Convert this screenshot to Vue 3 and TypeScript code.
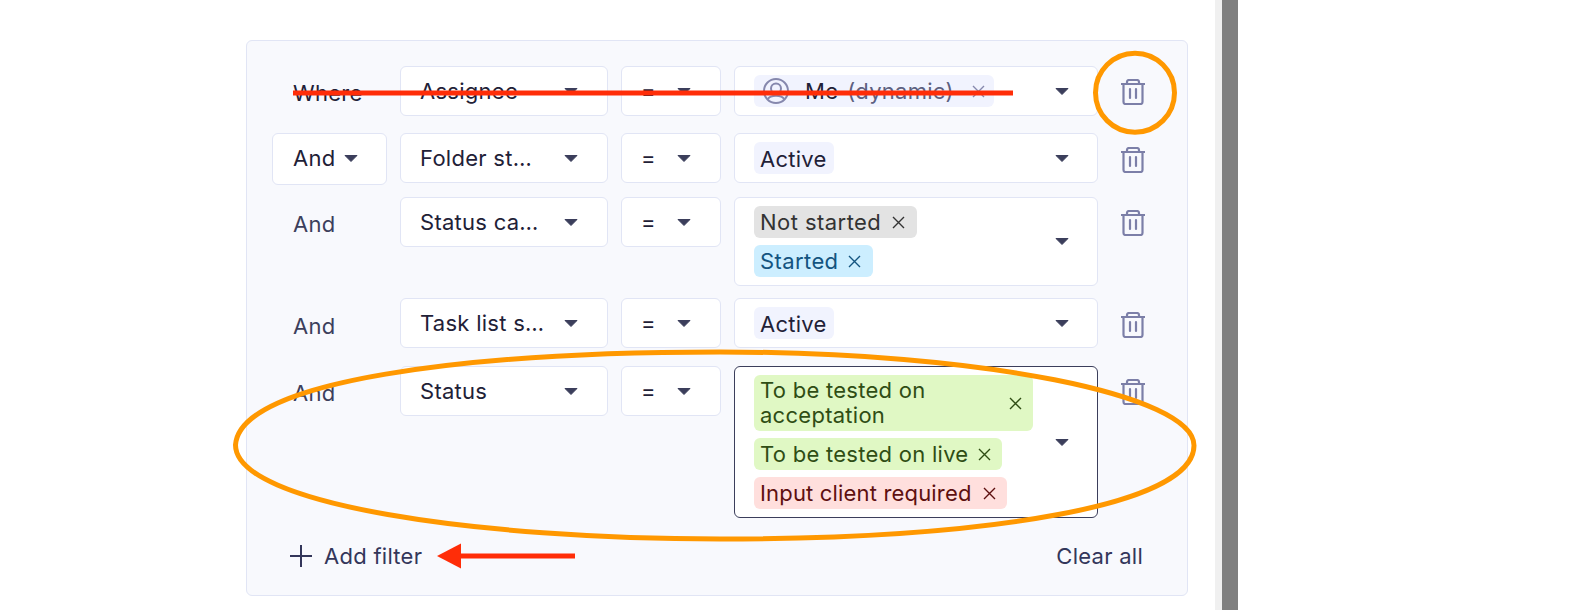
<script setup lang="ts">
interface Chip {
  text: string
  tone: string
  removable: boolean
  hint?: string
  avatar?: boolean
}
interface FilterRow {
  label: string
  labelSelect: boolean
  field: string
  chips: Chip[]
  focused: boolean
  tall: boolean
}

const rows: FilterRow[] = [
  {
    label: 'Where',
    labelSelect: false,
    field: 'Assignee',
    focused: false,
    tall: false,
    chips: [{ text: 'Me', hint: '(dynamic)', tone: 'me', removable: true, avatar: true }],
  },
  {
    label: 'And',
    labelSelect: true,
    field: 'Folder st…',
    focused: false,
    tall: true,
    chips: [{ text: 'Active', tone: 'plain', removable: false }],
  },
  {
    label: 'And',
    labelSelect: false,
    field: 'Status ca…',
    focused: false,
    tall: false,
    chips: [
      { text: 'Not started', tone: 'grey', removable: true },
      { text: 'Started', tone: 'blue', removable: true },
    ],
  },
  {
    label: 'And',
    labelSelect: false,
    field: 'Task list s…',
    focused: false,
    tall: true,
    chips: [{ text: 'Active', tone: 'plain', removable: false }],
  },
  {
    label: 'And',
    labelSelect: false,
    field: 'Status',
    focused: true,
    tall: false,
    chips: [
      { text: 'To be tested on acceptation', tone: 'green', removable: true },
      { text: 'To be tested on live', tone: 'green', removable: true },
      { text: 'Input client required', tone: 'red', removable: true },
    ],
  },
]
</script>

<template>
  <div class="page">
    <section class="panel">
      <div v-for="(row, i) in rows" :key="i" class="row" :class="{ tall: row.tall }">
        <div v-if="row.labelSelect" class="select conj">
          <span>{{ row.label }}</span>
          <svg class="caret" viewBox="0 0 14 7"><path d="M1 0.5H13L7 6.5Z" /></svg>
        </div>
        <div v-else class="label" :class="{ strong: row.label === 'Where' }">{{ row.label }}</div>

        <div class="select field">
          <span>{{ row.field }}</span>
          <svg class="caret" viewBox="0 0 14 7"><path d="M1 0.5H13L7 6.5Z" /></svg>
        </div>

        <div class="select op">
          <span>=</span>
          <svg class="caret" viewBox="0 0 14 7"><path d="M1 0.5H13L7 6.5Z" /></svg>
        </div>

        <div class="value" :class="{ focused: row.focused }">
          <div class="chips">
            <div v-for="chip in row.chips" :key="chip.text" class="chip" :class="chip.tone">
              <svg v-if="chip.avatar" class="avatar" viewBox="0 0 26 26">
                <circle cx="13" cy="13" r="12" />
                <circle cx="13" cy="10.5" r="5" />
                <path d="M5 21C7 16.5 19 16.5 21 21" />
              </svg>
              <span class="chip-text">{{ chip.text }}</span>
              <span v-if="chip.hint" class="hint">{{ chip.hint }}</span>
              <svg v-if="chip.removable" class="remove" viewBox="0 0 13 13">
                <path d="M1 1L12 12M12 1L1 12" />
              </svg>
            </div>
          </div>
          <svg class="caret" viewBox="0 0 14 7"><path d="M1 0.5H13L7 6.5Z" /></svg>
        </div>

        <svg class="trash" viewBox="0 0 24 26">
          <path d="M0.5 5H23.5" />
          <path d="M6 5V3A2 2 0 0 1 8 1H16A2 2 0 0 1 18 3V5" />
          <path d="M2.5 5V23A2 2 0 0 0 4.500 25H19.500A2 2 0 0 0 21.500 23V5" />
          <path d="M9 10V19M15 10V19" />
        </svg>
      </div>

      <footer class="footer">
        <div class="add">
          <svg class="plus" viewBox="0 0 22 22"><path d="M11 0V22M0 11H22" /></svg>
          <span>Add filter</span>
        </div>
        <span class="clear">Clear all</span>
      </footer>
    </section>

    <div class="gutter"></div>
    <div class="scrollbar"></div>

    <svg class="marks" viewBox="0 0 1580 610">
      <path class="strike" d="M293 93H1013" />
      <path class="strike" d="M575 556H458" />
      <path class="arrow-head" d="M437 556L461 543.500V568.500Z" />
      <circle class="loop" cx="1135" cy="92.700" r="39.500" />
      <path
        class="loop"
        d="M235.500 445C240 380 470 352 720 352C980 352 1194 395 1194 445.500C1194 505 990 539 720 539C480 539 235.500 505 235.500 445Z"
      />
    </svg>
  </div>
</template>

<style>
html,
body {
  margin: 0;
  background: #fff;
}
</style>

<style scoped>
.page {
  position: relative;
  display: flex;
  align-items: flex-start;
  width: 1580px;
  height: 610px;
  overflow: hidden;
  background: #fff;
  font-family: Inter, "Liberation Sans", sans-serif;
  font-size: 22px;
  letter-spacing: 0.27px;
  color: #1f2137;
}
.panel {
  box-sizing: border-box;
  width: 942px;
  height: 556px;
  margin: 40px 0 0 246px;
  padding: 25px 25px 0;
  display: flex;
  flex-direction: column;
  gap: 12px;
  background: #f8f9fd;
  border: 1px solid #e1e5f5;
  border-radius: 6px;
}
.row {
  display: flex;
  align-items: flex-start;
  gap: 13px;
}
.label {
  box-sizing: border-box;
  width: 115px;
  height: 55px;
  padding: 14px 0 0 21px;
  line-height: 26px;
  color: #3c3f5c;
}
.tall .label {
  height: 56px;
  padding-top: 15px;
}
.label.strong {
  color: #1f2137;
}
.select {
  box-sizing: border-box;
  display: flex;
  align-items: center;
  justify-content: space-between;
  height: 50px;
  background: #fff;
  border: 1px solid #e1e5f5;
  border-radius: 6px;
}
.conj {
  width: 115px;
  height: 52px;
  padding: 0 0 2px 20px;
  justify-content: flex-start;
  gap: 9px;
}
.field {
  width: 208px;
  padding: 0 29px 0 19px;
}
.op {
  width: 100px;
  padding: 0 29px 0 19px;
}
.caret {
  flex: none;
  width: 14px;
  height: 7px;
  fill: #3b3e5b;
  stroke: #3b3e5b;
  stroke-width: 1;
  stroke-linejoin: round;
}
.value {
  box-sizing: border-box;
  width: 364px;
  min-height: 50px;
  padding: 8px 28px 8px 19px;
  display: flex;
  align-items: center;
  justify-content: space-between;
  background: #fff;
  border: 1px solid #e1e5f5;
  border-radius: 6px;
}
.value.focused {
  border-color: #3b3e5b;
}
.chips {
  width: 279px;
  display: flex;
  flex-direction: column;
  align-items: flex-start;
  gap: 7px;
}
.chip {
  box-sizing: border-box;
  display: flex;
  align-items: center;
  min-height: 32px;
  padding: 3px 12px 3px 6px;
  line-height: 25px;
  border-radius: 6px;
}
.chip-text {
  flex: 0 1 auto;
}
.remove {
  flex: none;
  width: 13px;
  height: 13px;
  margin-left: 12px;
  stroke: currentColor;
  stroke-width: 1.4;
  fill: none;
}
.me {
  padding-left: 9px;
  padding-right: 9px;
  background: #f1f3fe;
  color: #1f2137;
}
.avatar {
  flex: none;
  width: 26px;
  height: 26px;
  margin-right: 16px;
  fill: none;
  stroke: #8688ad;
  stroke-width: 2;
}
.hint {
  margin-left: 9px;
  color: #5d6080;
}
.me .remove {
  margin-left: 18px;
  stroke: #8688ad;
}
.plain {
  padding: 4px 7px 2px 6px;
  background: #f1f3fe;
}
.grey {
  background: #e3e3e3;
  color: #333;
  letter-spacing: 0.45px;
}
.grey .remove {
  margin-left: 11px;
}
.blue {
  background: #cceeff;
  color: #135480;
  letter-spacing: 0.4px;
}
.blue .remove {
  margin-left: 10px;
}
.green {
  padding-right: 11px;
  background: #e0f8c4;
  color: #2f4d14;
}
.green .remove {
  margin-left: 10px;
}
.red {
  padding-right: 11px;
  background: #ffdfdd;
  color: #5e1010;
  letter-spacing: 0.17px;
}
.red .remove {
  margin-left: 11px;
}
.trash {
  flex: none;
  width: 24px;
  height: 26px;
  margin: 13px 0 0 10px;
  fill: none;
  stroke: #7c7fa8;
  stroke-width: 2.2;
  stroke-linecap: round;
}
.tall .trash {
  margin-top: 14px;
}
.footer {
  display: flex;
  align-items: center;
  justify-content: space-between;
  height: 36px;
  margin: 8px 19px 0 18px;
  color: #33365a;
}
.add {
  display: flex;
  align-items: center;
  gap: 12px;
}
.plus {
  width: 22px;
  height: 22px;
  fill: none;
  stroke: #33365a;
  stroke-width: 2;
}
.gutter {
  flex: none;
  width: 7px;
  height: 610px;
  margin-left: 27px;
  background: #f0f0f0;
}
.scrollbar {
  flex: none;
  width: 16px;
  height: 610px;
  background: #808080;
}
.marks {
  position: absolute;
  inset: 0;
  width: 1580px;
  height: 610px;
  pointer-events: none;
  fill: none;
}
.strike {
  stroke: #ff2d08;
  stroke-width: 5;
}
.arrow-head {
  fill: #ff2d08;
}
.loop {
  stroke: #ff9800;
  stroke-width: 5;
}
</style>
